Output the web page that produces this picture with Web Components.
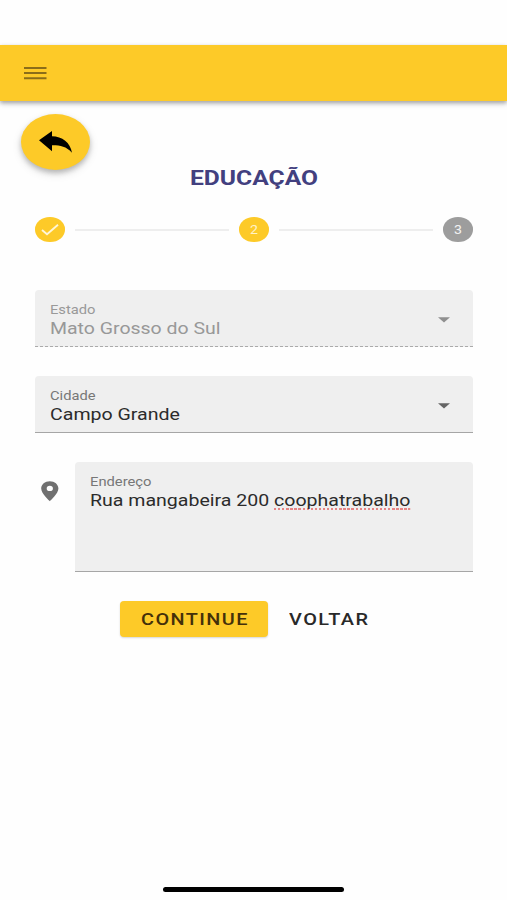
<!DOCTYPE html>
<html lang="pt-BR">
<head>
<meta charset="utf-8">
<meta name="viewport" content="width=device-width">
<title>Educação</title>
<style>
html,body{margin:0;height:100%;background:#fefefe;overflow:hidden}
body{font-family:Roboto,"Liberation Sans",sans-serif;color:#2b2b2b}
</style>
</head>
<body>
<registration-page></registration-page>
<script>
const define = (name, html, init) => customElements.define(name, class extends HTMLElement {
  constructor() {
    super();
    this.attachShadow({mode: 'open'}).innerHTML = html;
  }
  connectedCallback() { if (init) init.call(this, this.shadowRoot); }
});

// Text stretched horizontally to the width given in the "w" attribute.
define('wide-text', `
<style>
:host{display:block;white-space:nowrap;flex:none}
span{display:inline-block;transform-origin:0 50%}
</style><span><slot></slot></span>`, function (root) {
  const w = +this.getAttribute('w');
  const span = root.querySelector('span');
  const natural = span.getBoundingClientRect().width - (parseFloat(getComputedStyle(span).letterSpacing) || 0);
  this.style.width = w + 'px';
  span.style.transform = `scaleX(${w / natural})`;
});

define('app-bar', `
<style>
:host{display:flex;align-items:center;height:56px;padding-left:24px;background:#fdca28;box-shadow:0 2px 4px rgba(0,0,0,.3),0 3px 7px rgba(0,0,0,.1);position:relative}
svg{display:block}
</style>
<svg width="23" height="14" viewBox="0 0 23 14"><path d="M0 2H22.5M0 7.1H22.5M0 12.2H22.5" stroke="#8b6d19" stroke-width="2"/></svg>`);

define('back-button', `
<style>
:host{display:flex;width:69px;height:56px;border-radius:50%;background:#fdca28;box-shadow:0 3px 5px rgba(0,0,0,.2),0 4px 10px rgba(0,0,0,.13)}
svg{display:block;margin:17px 0 0 18px}
</style>
<svg width="34" height="24" viewBox="0 0 34 24"><path d="M0 9.3L13 0V5.2C23 5.4 31.5 11.5 33 21.8C27 15.2 21 14.2 13 14.3V20.3Z" fill="#000"/></svg>`);

define('step-dot', `
<style>
:host{display:flex;align-items:center;justify-content:center;width:29.5px;height:24.5px;border-radius:50%;background:#fdca28;color:#fff2c8;font-size:12px;line-height:16px;flex:none}
:host([pending]){background:#9d9d9d;color:#f2f2f2}
</style><slot></slot>`);

define('step-line', `
<style>:host{display:block;flex:1;height:2px;margin:0 10.5px;background:#eeeeee}</style>`);

define('progress-steps', `
<style>
:host{display:flex;align-items:center;height:25px}
svg{display:block}
</style>
<step-dot><svg width="18" height="13" viewBox="0 0 18 13"><path d="M1 7L6 11.2L17 1.8" fill="none" stroke="#fff6d8" stroke-width="1.9"/></svg></step-dot>
<step-line></step-line>
<step-dot><wide-text w="8">2</wide-text></step-dot>
<step-line></step-line>
<step-dot pending><wide-text w="8">3</wide-text></step-dot>`);

define('form-field', `
<style>
:host{display:flex;box-sizing:border-box;height:57px;padding:11px 23px 0 15px;background:#efefef;border-radius:4px 4px 0 0;border-bottom:1px solid #a6a6a6;--label:#777}
:host([disabled]){color:#989898;--label:#999;border-bottom:0;background:repeating-linear-gradient(90deg,#aaa 0 3px,#efefef 3px 5px) 0 100%/100% 1px no-repeat #efefef}
:host([multiline]){height:110px}
div{flex:1;min-width:0}
.label,.value{position:relative;top:.6px}
.label{color:var(--label);font-size:12.6px;line-height:16px}
.value{font-size:16.8px;line-height:20px}
svg{display:none;margin-top:15.5px}
:host([select]) svg{display:block}
</style>
<div><div class="label"><slot name="label"></slot></div><div class="value"><slot></slot></div></div>
<svg width="12" height="6" viewBox="0 0 12 6"><path d="M0 .3H12L6 5.5Z" fill="var(--arrow,#656565)"/></svg>`);

define('spell-mark', `
<style>
:host{display:inline-block;line-height:20px;background:repeating-linear-gradient(90deg,#e78686 0 2px,transparent 2px 3.5px) 0 100%/100% 2px no-repeat}
</style><slot></slot>`);

define('map-pin', `
<style>:host{display:block;width:40px;flex:none}svg{display:block;margin:19px 0 0 6px}</style>
<svg width="18" height="21" viewBox="0 0 18 21"><path fill-rule="evenodd" d="M8.8.2C3.9.2.2 3.4.2 7.5C.2 12.7 8.8 20.2 8.8 20.2S17.4 12.7 17.4 7.5C17.4 3.4 13.7.2 8.8.2ZM8.8 4.8A3.1 2.6 0 1 1 8.8 10A3.1 2.6 0 1 1 8.8 4.8Z" fill="#707070"/></svg>`);

define('action-button', `
<style>
:host{display:flex;align-items:center;box-sizing:border-box;height:36px;padding:2px 21px 0 20.5px;border-radius:4px;font-size:16.4px;font-weight:500;letter-spacing:1.2px;line-height:20px;color:#292929}
:host([primary]){background:#fdca28;color:#44300a;box-shadow:0 1px 2px rgba(0,0,0,.16)}
</style><slot></slot>`);

define('registration-page', `
<style>
:host{display:flex;flex-direction:column;height:900px;width:507px;box-sizing:border-box;padding-top:45px}
main{display:flex;flex-direction:column;padding:13px 34.5px 0 35px}
back-button{margin-left:-14.5px}
h1{margin:-4px 0 0;display:flex;font-size:20.6px;line-height:24px;font-weight:700;color:#42407f;padding-left:154.5px}
progress-steps{margin-top:27px}
form-field{margin-top:29px}
.state{margin-top:48px}
.address{display:flex;margin-top:29px}
.address form-field{flex:1;margin:0}
.actions{display:flex;margin:29px 0 0 85px}
footer{margin:auto 0 8px;align-self:center;width:181px;height:5px;border-radius:3px;background:#000}
</style>
<app-bar></app-bar>
<main>
<back-button></back-button>
<h1><wide-text w="128">EDUCAÇÃO</wide-text></h1>
<progress-steps></progress-steps>
<form-field class="state" select disabled style="--arrow:#8f8f8f"><wide-text slot="label" w="45.5">Estado</wide-text><wide-text w="170.5">Mato Grosso do Sul</wide-text></form-field>
<form-field select><wide-text slot="label" w="45.5">Cidade</wide-text><wide-text w="130">Campo Grande</wide-text></form-field>
<div class="address"><map-pin></map-pin><form-field multiline><wide-text slot="label" w="61.5">Endereço</wide-text><wide-text w="320.5">Rua mangabeira 200 <spell-mark>coophatrabalho</spell-mark></wide-text></form-field></div>
<div class="actions"><action-button primary><wide-text w="106.5">CONTINUE</wide-text></action-button><action-button><wide-text w="79">VOLTAR</wide-text></action-button></div>
</main>
<footer></footer>`);
</script>
</body>
</html>
